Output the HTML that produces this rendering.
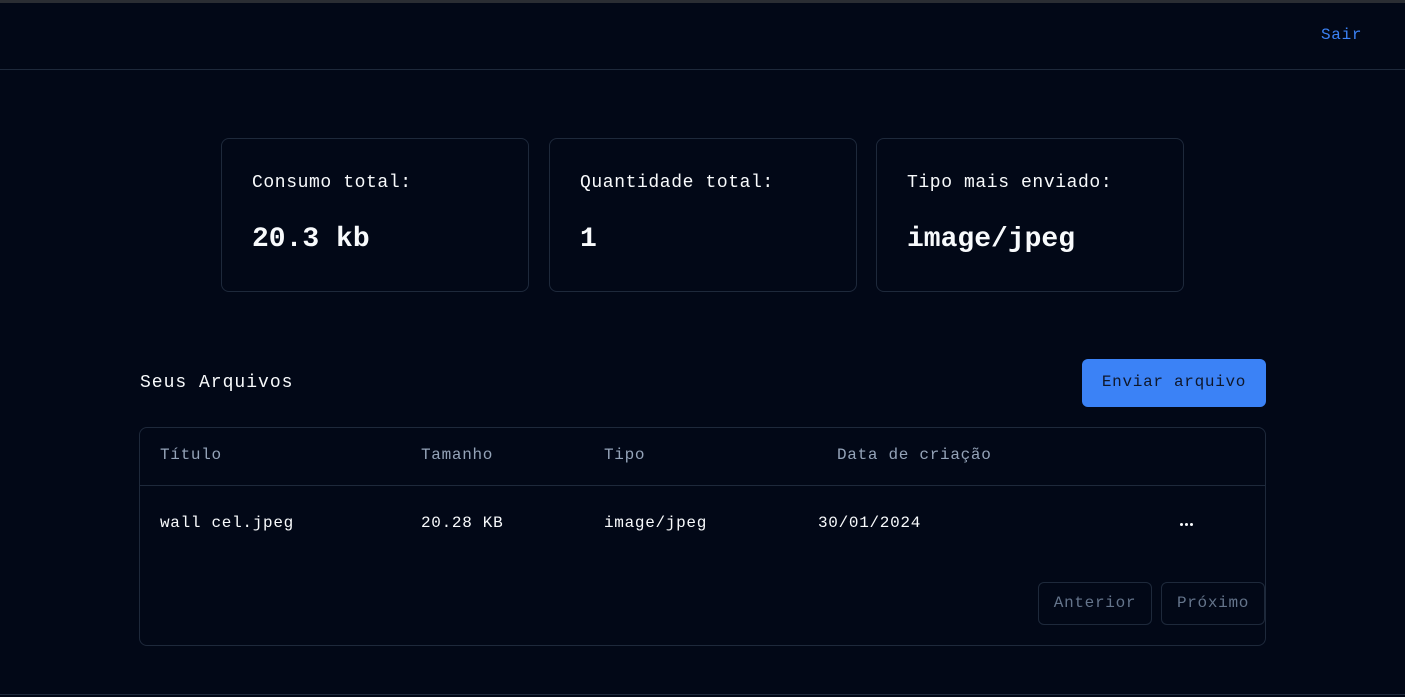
<!DOCTYPE html>
<html><head><meta charset="utf-8"><style>
*{box-sizing:border-box;margin:0;padding:0}
body{width:1405px;height:697px;background:#020817;color:#f8fafc;font-family:"Liberation Mono","DejaVu Sans Mono",monospace;position:relative;overflow:hidden;letter-spacing:0.7px}
.top{position:absolute;left:0;top:0;width:1405px;height:3px;background:#2a2d33}
.hdr{position:absolute;left:0;top:69px;width:1405px;height:1px;background:#1e293b}
.bot{position:absolute;left:0;top:694px;width:1405px;height:1px;background:#1e293b}
.sair{position:absolute;left:1321px;top:26px;font-size:16px;color:#3b82f6}
.card{position:absolute;top:138px;width:308px;height:154px;border:1px solid #1e293b;border-radius:8px;padding:0 30px}
.card .l{position:absolute;left:30px;top:34px;font-size:18px;letter-spacing:0.6px}
.card .v{position:absolute;left:30px;top:85px;font-size:28px;font-weight:bold;letter-spacing:0}
.title{position:absolute;left:140px;top:373px;font-size:18px;letter-spacing:1px}
.btn{position:absolute;left:1082px;top:359px;width:184px;height:48px;background:#3b82f6;border-radius:6px;color:#0f172a;font-size:16px;text-align:center;line-height:46px}
.tbl{position:absolute;left:139px;top:427px;width:1127px;height:219px;border:1px solid #1e293b;border-radius:8px}
.hl{position:absolute;left:0;top:57px;width:100%;height:1px;background:#1e293b}
.t{position:absolute;font-size:16px}
.h{color:#94a3b8;top:18px}
.r{top:86px}
.d{position:absolute;top:95px;width:3px;height:3px;border-radius:50%;background:#f8fafc}
.pb{position:absolute;top:154px;height:43px;border:1px solid #1e293b;border-radius:6px;color:#64748b;font-size:16px;line-height:41px;text-align:center}
</style></head><body>
<div class="top"></div>
<div class="sair">Sair</div>
<div class="hdr"></div>
<div class="card" style="left:221px"><div class="l">Consumo total:</div><div class="v">20.3 kb</div></div>
<div class="card" style="left:549px"><div class="l">Quantidade total:</div><div class="v">1</div></div>
<div class="card" style="left:876px"><div class="l">Tipo mais enviado:</div><div class="v">image/jpeg</div></div>
<div class="title">Seus Arquivos</div>
<div class="btn">Enviar arquivo</div>
<div class="tbl">
<div class="t h" style="left:20px">Título</div>
<div class="t h" style="left:281px">Tamanho</div>
<div class="t h" style="left:464px">Tipo</div>
<div class="t h" style="left:697px">Data de criação</div>
<div class="hl"></div>
<div class="t r" style="left:20px">wall cel.jpeg</div>
<div class="t r" style="left:281px">20.28 KB</div>
<div class="t r" style="left:464px">image/jpeg</div>
<div class="t r" style="left:678px">30/01/2024</div>
<div class="d" style="left:1040px"></div><div class="d" style="left:1045px"></div><div class="d" style="left:1050px"></div>
<div class="pb" style="left:898px;width:114px">Anterior</div>
<div class="pb" style="left:1021px;width:104px">Próximo</div>
</div>
<div class="bot"></div>
</body></html>
